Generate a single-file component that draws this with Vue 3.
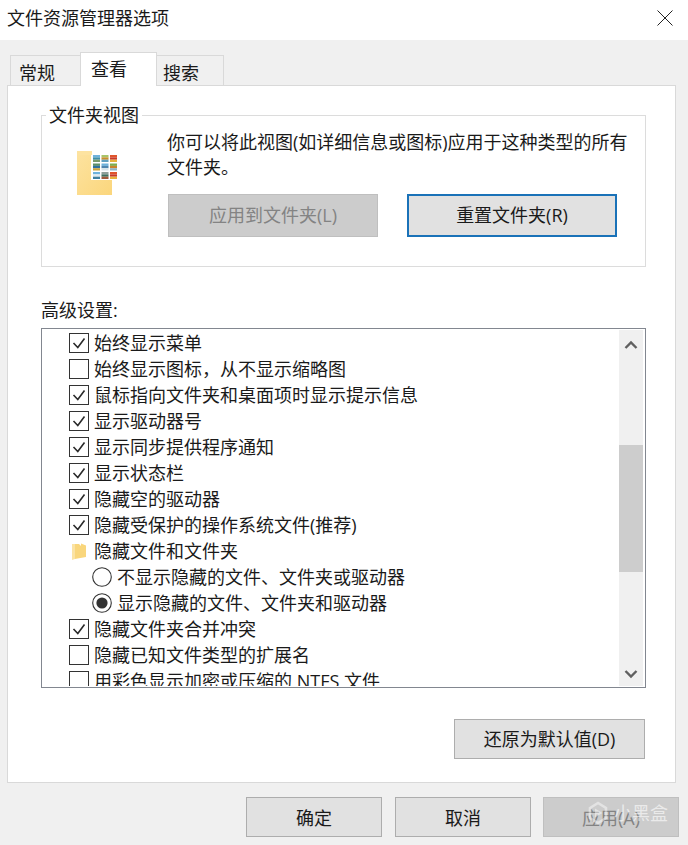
<script setup>
const rows = [
  { type: 'check', on: true, label: '始终显示菜单' },
  { type: 'check', on: false, label: '始终显示图标，从不显示缩略图' },
  { type: 'check', on: true, label: '鼠标指向文件夹和桌面项时显示提示信息' },
  { type: 'check', on: true, label: '显示驱动器号' },
  { type: 'check', on: true, label: '显示同步提供程序通知' },
  { type: 'check', on: true, label: '显示状态栏' },
  { type: 'check', on: true, label: '隐藏空的驱动器' },
  { type: 'check', on: true, label: '隐藏受保护的操作系统文件(推荐)' },
  { type: 'folder', label: '隐藏文件和文件夹' },
  { type: 'radio', on: false, label: '不显示隐藏的文件、文件夹或驱动器' },
  { type: 'radio', on: true, label: '显示隐藏的文件、文件夹和驱动器' },
  { type: 'check', on: true, label: '隐藏文件夹合并冲突' },
  { type: 'check', on: false, label: '隐藏已知文件类型的扩展名' },
  { type: 'check', on: false, label: '用彩色显示加密或压缩的 NTFS 文件' },
]

// thumbnails on the big folder icon: sky, middle, ground colours
const thumbs = [
  ['#6fb2dc', '#3f8fa8', '#7a9a6a'], ['#a8c46a', '#c98f2c', '#5f9fc0'], ['#e0552c', '#c9392a', '#e8b23c'],
  ['#5f8f6a', '#2f6f9f', '#c9a23c'], ['#6fb2dc', '#4f86b0', '#d8e4ea'], ['#7fae4f', '#c9842c', '#8fb4c4'],
  ['#6fb2dc', '#e0eaf0', '#3f7f9f'], ['#8fa09a', '#3f6f5f', '#a05a3c'], ['#e0552c', '#c9392a', '#e8b23c'],
]
</script>

<template>
  <div class="dialog">
    <header class="titlebar">
      <span class="title">文件资源管理器选项</span>
      <svg class="close" width="16" height="16" viewBox="0 0 16 16">
        <path d="M0.5 0.5L15.5 15.5M15.5 0.5L0.5 15.5" stroke="#222" stroke-width="1" fill="none" />
      </svg>
    </header>

    <main class="body">
      <nav class="tabs">
        <div class="tab first">常规</div>
        <div class="tab active">查看</div>
        <div class="tab last">搜索</div>
      </nav>

      <section class="panel">
        <fieldset class="group">
          <legend>文件夹视图</legend>
          <div class="view-row">
            <svg class="big-folder" width="42" height="46" viewBox="0 0 42 46">
              <defs>
                <linearGradient id="folderFill" x1="0" y1="0" x2="1" y2="1">
                  <stop offset="0" stop-color="#fde3a0" />
                  <stop offset="1" stop-color="#fbd67c" />
                </linearGradient>
              </defs>
              <rect x="0" y="1" width="35" height="44" fill="url(#folderFill)" />
              <rect x="14" y="1" width="27" height="29" fill="#fff" />
              <rect x="0" y="1" width="15" height="4" fill="#fde3a0" />
              <template v-for="(t, i) in thumbs" :key="i">
                <rect :x="16 + (i % 3) * 8.5" :y="5 + Math.floor(i / 3) * 8.5" width="7" height="2.4" :fill="t[0]" />
                <rect :x="16 + (i % 3) * 8.5" :y="7.4 + Math.floor(i / 3) * 8.5" width="7" height="2.3" :fill="t[1]" />
                <rect :x="16 + (i % 3) * 8.5" :y="9.7 + Math.floor(i / 3) * 8.5" width="7" height="2.3" :fill="t[2]" />
              </template>
            </svg>
            <div class="view-text">
              <p>你可以将此视图(如详细信息或图标)应用于这种类型的所有文件夹。</p>
              <div class="view-buttons">
                <button class="btn wide disabled">应用到文件夹(L)</button>
                <button class="btn wide focused">重置文件夹(R)</button>
              </div>
            </div>
          </div>
        </fieldset>

        <div class="adv-label">高级设置:</div>
        <div class="list">
          <div class="rows">
            <div v-for="row in rows" :key="row.label" class="row" :class="row.type">
              <span v-if="row.type === 'check'" class="checkbox">
                <svg v-if="row.on" width="18" height="18" viewBox="0 0 18 18">
                  <path d="M3.5 9L7.8 13.5L14.5 4.5" stroke="#2a2a2a" stroke-width="1.6" fill="none" />
                </svg>
              </span>
              <svg v-else-if="row.type === 'folder'" class="small-folder" width="14" height="17" viewBox="0 0 14 17">
                <path d="M0 1H7L9 3V0.5L14 2.5V14L0 16.5Z" fill="#f9d67c" />
                <path d="M0 1H3V16L0 16.5Z" fill="#fbe3a4" />
              </svg>
              <svg v-else class="radio" width="20" height="20" viewBox="0 0 20 20">
                <circle cx="10" cy="10" r="9.3" fill="#fff" stroke="#333" stroke-width="1.1" />
                <circle v-if="row.on" cx="10" cy="10" r="5.6" fill="#333" />
              </svg>
              <span class="label">{{ row.label }}</span>
            </div>
          </div>
          <div class="scrollbar">
            <svg class="arrow" width="14" height="10" viewBox="0 0 14 10">
              <path d="M1.5 8L7 2.5L12.5 8" stroke="#606060" stroke-width="2.4" fill="none" />
            </svg>
            <div class="thumb"></div>
            <svg class="arrow down" width="14" height="10" viewBox="0 0 14 10">
              <path d="M1.5 2L7 7.5L12.5 2" stroke="#606060" stroke-width="2.4" fill="none" />
            </svg>
          </div>
        </div>

        <div class="restore-row">
          <button class="btn restore">还原为默认值(D)</button>
        </div>
      </section>

      <footer class="footer">
        <button class="btn action">确定</button>
        <button class="btn action">取消</button>
        <button class="btn action disabled">应用(A)</button>
      </footer>
    </main>

    <div class="watermark">
      <svg width="20" height="24" viewBox="0 0 20 24">
        <path d="M2 7L10 2L18 7V17L10 22L2 17Z" fill="none" stroke="#fff" stroke-width="2.6" opacity="0.45" />
        <path d="M7 7.5V16.5L14.5 12Z" fill="#fff" opacity="0.45" />
      </svg>
      <span>小黑盒</span>
    </div>
  </div>
</template>

<style>
html, body {
  margin: 0;
  background: #f0f0f0;
}
</style>

<style scoped>
.dialog {
  position: relative;
  width: 688px;
  height: 845px;
  display: flex;
  flex-direction: column;
  overflow: hidden;
  background: #f0f0f0;
  color: #1a1a1a;
  font-family: "Open Sans", "Noto Sans CJK SC", sans-serif;
  font-size: 18px;
}

.titlebar {
  height: 40px;
  flex: none;
  background: #fff;
  display: flex;
  align-items: center;
  justify-content: space-between;
  padding: 0 15px 5px 7px;
  box-sizing: border-box;
}

.title {
  line-height: 26px;
}

.body {
  flex: 1;
  display: flex;
  flex-direction: column;
  padding: 12px 12px 0 7px;
}

.tabs {
  display: flex;
  height: 33px;
  padding-left: 3px;
  align-items: flex-end;
  flex: none;
}

.tab {
  box-sizing: border-box;
  height: 30px;
  border: 1px solid #d9d9d9;
  border-bottom: none;
  background: #f0f0f0;
  line-height: 34px;
}

.tab.first {
  width: 70px;
  padding-left: 8px;
  border-right: none;
}

.tab.last {
  width: 67px;
  padding-left: 6px;
  border-left: none;
}

.tab.active {
  position: relative;
  z-index: 1;
  width: 77px;
  height: 34px;
  padding-left: 10px;
  margin-bottom: -1px;
  background: #fff;
  line-height: 32px;
}

.panel {
  box-sizing: border-box;
  height: 698px;
  flex: none;
  background: #fff;
  border: 1px solid #d9d9d9;
  padding: 15px 29px 0 33px;
  display: flex;
  flex-direction: column;
}

.group {
  margin: 0;
  padding: 0;
  height: 166px;
  box-sizing: border-box;
  border: 1px solid #dcdcdc;
}

.group legend {
  padding: 0 3px;
  margin-left: 4px;
  line-height: 28px;
}

.view-row {
  display: flex;
}

.big-folder {
  flex: none;
  margin: 21px 0 0 35px;
}

.view-text {
  margin-left: 48px;
  flex: 1;
}

.view-text p {
  margin: 1px 0 0;
  padding: 0;
  line-height: 25px;
  width: 466px;
}

.view-buttons {
  display: flex;
  gap: 29px;
  margin-top: 14px;
  margin-left: 1px;
}

.btn {
  box-sizing: border-box;
  border: 1px solid #adadad;
  background: #e1e1e1;
  color: #1a1a1a;
  font: inherit;
  padding: 0;
}

.btn.disabled {
  background: #cccccc;
  border-color: #bfbfbf;
  color: #838383;
}

.btn.wide {
  width: 210px;
  height: 43px;
  padding-bottom: 3px;
}

.btn.focused {
  border: 2px solid #1a72b8;
}

.adv-label {
  margin-top: 30px;
  line-height: 26px;
  height: 26px;
}

.list {
  box-sizing: border-box;
  height: 360px;
  margin-top: 5px;
  border: 1px solid #828790;
  display: flex;
  padding: 1px 2px 1px 0;
}

.rows {
  flex: 1;
  overflow: hidden;
  padding-left: 27px;
}

.row {
  height: 26px;
  display: flex;
  align-items: center;
  white-space: nowrap;
  line-height: 26px;
}

.checkbox {
  box-sizing: border-box;
  width: 20px;
  height: 20px;
  border: 1px solid #333;
  display: flex;
  align-items: center;
  justify-content: center;
  flex: none;
  background: #fff;
}

.label {
  margin-left: 5px;
}

.small-folder {
  flex: none;
  margin: 0 3px 0 3px;
}

.row.radio {
  padding-left: 23px;
}

.radio {
  flex: none;
}

.scrollbar {
  width: 24px;
  flex: none;
  background: #f0f0f0;
  display: flex;
  flex-direction: column;
  align-items: center;
}

.arrow {
  flex: none;
  margin-top: 10px;
}

.arrow.down {
  margin-top: 97px;
}

.thumb {
  width: 24px;
  height: 127px;
  flex: none;
  margin-top: 95px;
  background: #cdcdcd;
}

.restore-row {
  display: flex;
  justify-content: flex-end;
  margin-top: 31px;
  margin-right: 1px;
}

.btn.restore {
  width: 191px;
  height: 40px;
  padding-bottom: 2px;
}

.footer {
  display: flex;
  justify-content: flex-end;
  gap: 12px;
  margin-top: 14px;
  margin-right: -3px;
}

.btn.action {
  width: 136px;
  height: 40px;
}

.btn.action:first-child {
  margin-right: 1px;
}

.watermark {
  position: absolute;
  left: 588px;
  top: 801px;
  display: flex;
  align-items: center;
  gap: 6px;
  color: rgba(255, 255, 255, 0.6);
  font-size: 18px;
  line-height: 24px;
}
</style>
